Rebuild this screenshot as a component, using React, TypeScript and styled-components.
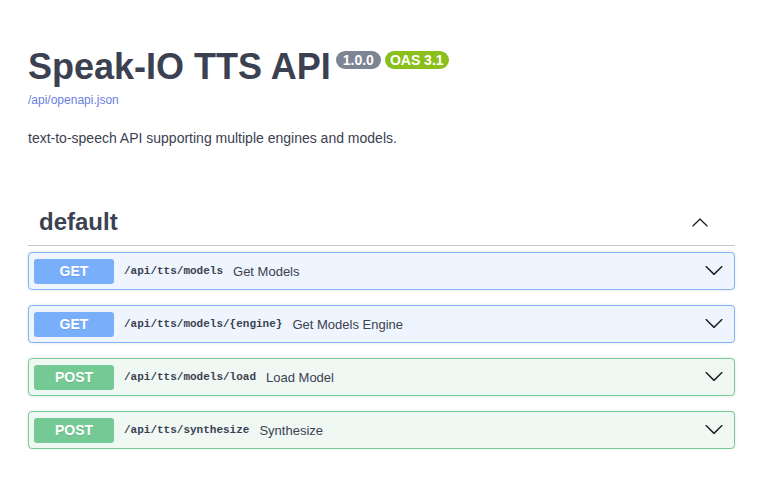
import React from 'react';
import styled, { createGlobalStyle } from 'styled-components';

const theme = {
  text: '#3b4151',
  link: '#6b7fe0',
  version: '#7d8492',
  oas: '#8bbf1c',
  get: '#78aefa',
  getBorder: '#82b3f8',
  getBg: '#eff5fe',
  post: '#74c995',
  postBorder: '#78cc97',
  postBg: '#eff8f3',
};

const GlobalStyle = createGlobalStyle`
  html, body {
    margin: 0;
    padding: 0;
    background: #ffffff;
  }
  body {
    font-family: 'Liberation Sans', Arial, sans-serif;
    color: ${theme.text};
  }
`;

const Page = styled.div`
  padding: 47px 28px 0;
`;

const Info = styled.section`
  display: flex;
  flex-direction: column;
  align-items: flex-start;
`;

const TitleRow = styled.div`
  display: flex;
  align-items: flex-start;
  gap: 4px;
`;

const Title = styled.h2`
  margin: 0 1px 0 0;
  font-size: 36px;
  line-height: 40px;
  font-weight: 700;
  color: ${theme.text};
`;

const Badge = styled.span<{ $bg: string; $pad: number }>`
  margin-top: 4px;
  display: inline-block;
  padding: 2px ${(p) => p.$pad}px;
  border-radius: 57px;
  background: ${(p) => p.$bg};
  color: #ffffff;
  font-size: 14px;
  line-height: 14px;
  font-weight: 700;
`;

const SpecLink = styled.a`
  margin-top: 6px;
  font-size: 12px;
  line-height: 14px;
  color: ${theme.link};
  text-decoration: none;
`;

const Description = styled.p`
  margin: 23px 0 0;
  font-size: 14px;
  line-height: 16px;
  color: ${theme.text};
`;

const TagSection = styled.section`
  margin-top: 52px;
`;

const TagHeader = styled.div`
  display: flex;
  align-items: center;
  justify-content: space-between;
  padding: 10px 26px 10px 11px;
  margin-bottom: 6px;
  border-bottom: 1px solid rgba(59, 65, 81, 0.3);
`;

const TagName = styled.h3`
  margin: 0;
  font-size: 24px;
  line-height: 27px;
  font-weight: 700;
  color: ${theme.text};
`;

const Opblock = styled.div<{ $method: 'get' | 'post' }>`
  display: flex;
  align-items: center;
  height: 36px;
  padding: 0 5px;
  margin-bottom: 15px;
  border-radius: 4px;
  border: 1px solid ${(p) => (p.$method === 'get' ? theme.getBorder : theme.postBorder)};
  background: ${(p) => (p.$method === 'get' ? theme.getBg : theme.postBg)};
  box-shadow: 0 0 3px rgba(0, 0, 0, 0.12);
`;

const Method = styled.span<{ $method: 'get' | 'post' }>`
  width: 80px;
  height: 25px;
  display: flex;
  align-items: center;
  justify-content: center;
  border-radius: 3px;
  background: ${(p) => (p.$method === 'get' ? theme.get : theme.post)};
  color: #ffffff;
  font-size: 14px;
  font-weight: 700;
  text-shadow: 0 1px 0 rgba(0, 0, 0, 0.1);
`;

const Path = styled.span`
  padding: 0 10px;
  font-family: 'Liberation Mono', 'DejaVu Sans Mono', monospace;
  font-size: 11px;
  font-weight: 700;
  color: ${theme.text};
`;

const Summary = styled.span`
  flex: 1;
  font-size: 13px;
  color: ${theme.text};
`;

const Arrow = styled.svg<{ $size: number }>`
  width: ${(p) => p.$size}px;
  height: ${(p) => p.$size}px;
  flex-shrink: 0;
  fill: #1f1f1f;
`;

const ArrowWrap = styled.span`
  display: flex;
  margin-right: 5px;
  margin-top: -2px;
`;

const downPath =
  'M17.418 6.109c.272-.268.709-.268.979 0s.271.701 0 .969l-7.908 7.83c-.27.268-.707.268-.979 0l-7.908-7.83c-.27-.268-.27-.701 0-.969.271-.268.709-.268.979 0L10 13.25l7.418-7.141z';
const upPath =
  'M17.418 14.908c.272.268.709.268.979 0s.271-.701 0-.969l-7.908-7.83c-.27-.268-.707-.268-.979 0l-7.908 7.83c-.27.268-.27.701 0 .969.271.268.709.268.979 0L10 7.767l7.418 7.141z';

const endpoints: { method: 'get' | 'post'; path: string; summary: string }[] = [
  { method: 'get', path: '/api/tts/models', summary: 'Get Models' },
  { method: 'get', path: '/api/tts/models/{engine}', summary: 'Get Models Engine' },
  { method: 'post', path: '/api/tts/models/load', summary: 'Load Model' },
  { method: 'post', path: '/api/tts/synthesize', summary: 'Synthesize' },
];

const App = () => {
  return (
    <Page>
      <GlobalStyle />
      <Info>
        <TitleRow>
          <Title>Speak-IO TTS API</Title>
          <Badge $bg={theme.version} $pad={7}>1.0.0</Badge>
          <Badge $bg={theme.oas} $pad={5}>OAS 3.1</Badge>
        </TitleRow>
        <SpecLink href="#">/api/openapi.json</SpecLink>
        <Description>text-to-speech API supporting multiple engines and models.</Description>
      </Info>

      <TagSection>
        <TagHeader>
          <TagName>default</TagName>
          <Arrow $size={18} viewBox="0 0 20 20">
            <path d={upPath} />
          </Arrow>
        </TagHeader>

        {endpoints.map((ep) => (
          <Opblock key={ep.path} $method={ep.method}>
            <Method $method={ep.method}>{ep.method.toUpperCase()}</Method>
            <Path>{ep.path}</Path>
            <Summary>{ep.summary}</Summary>
            <ArrowWrap>
              <Arrow $size={20} viewBox="0 0 20 20">
                <path d={downPath} />
              </Arrow>
            </ArrowWrap>
          </Opblock>
        ))}
      </TagSection>
    </Page>
  );
};

export default App;
